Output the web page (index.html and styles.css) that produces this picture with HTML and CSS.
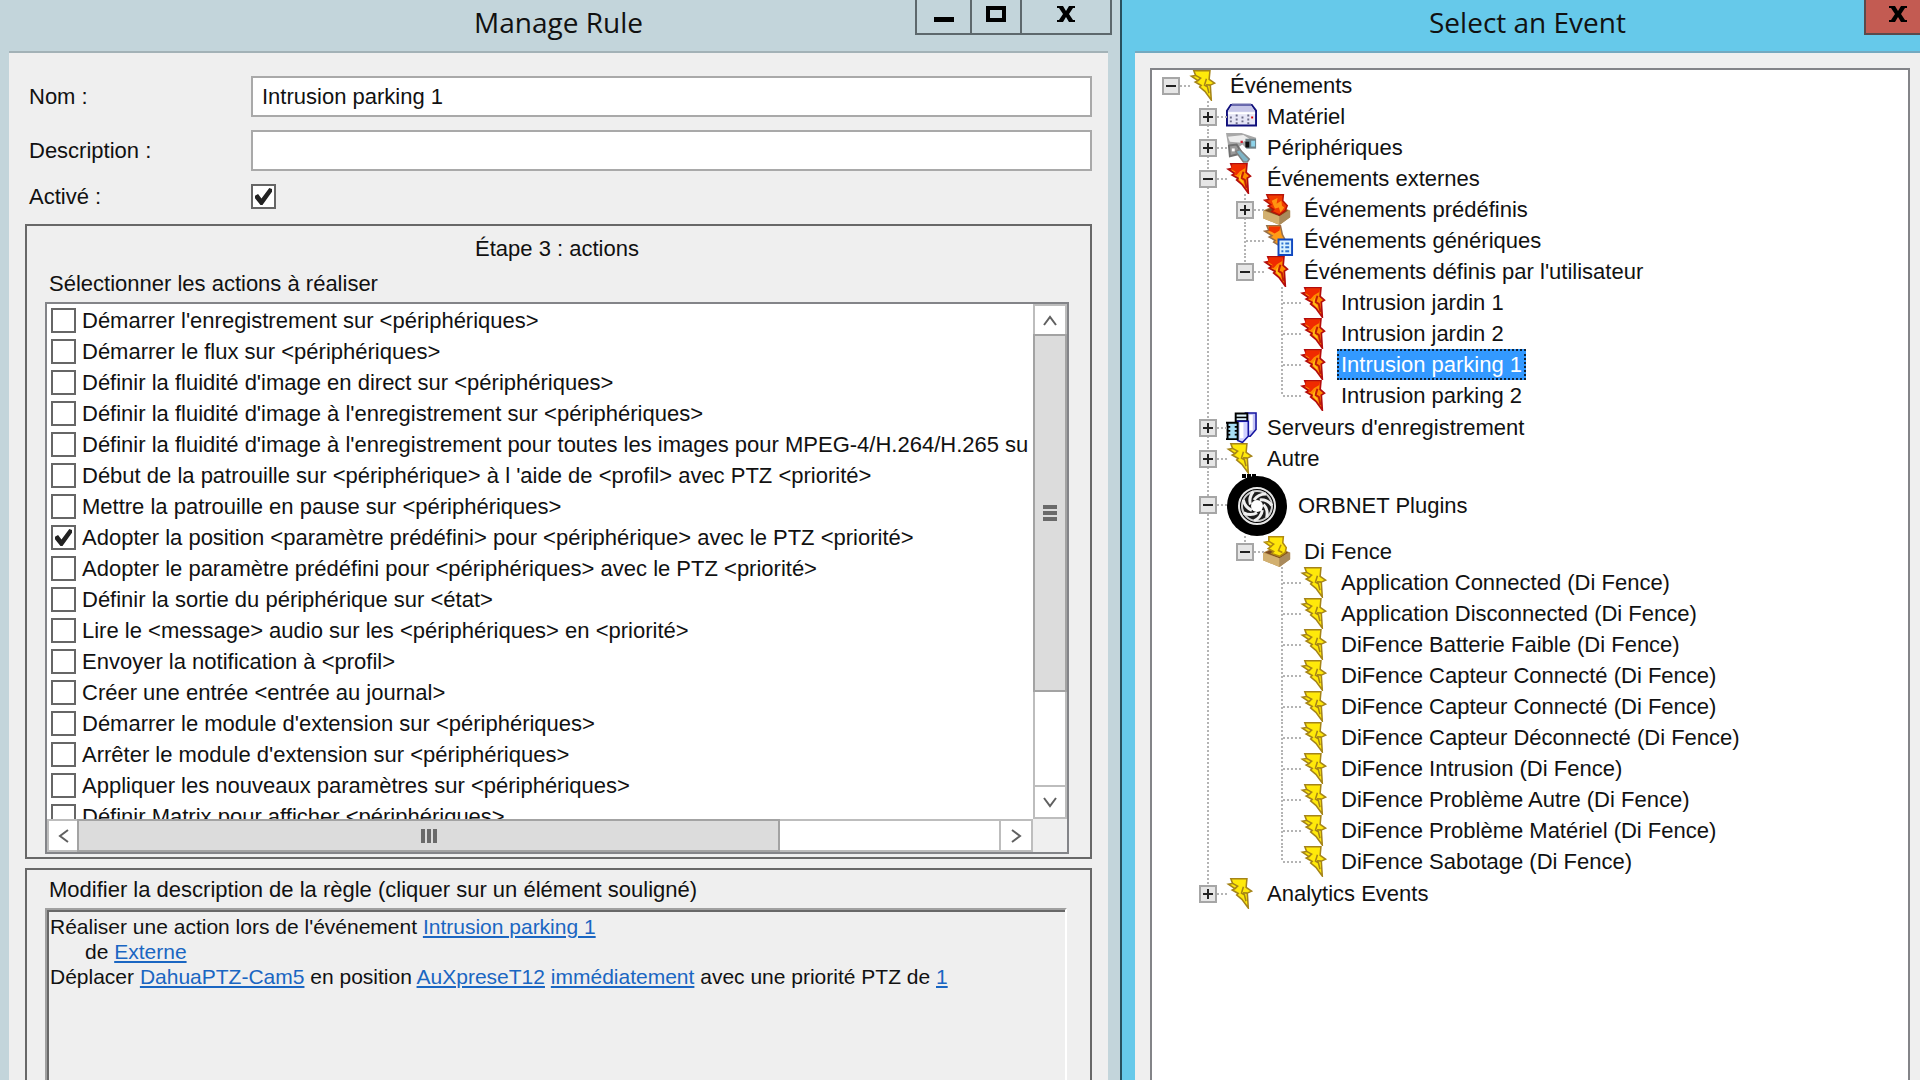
FILE: index.html
```html
<!DOCTYPE html>
<html lang="fr">
<head>
    <meta charset="UTF-8">
    <meta name="viewport" content="width=device-width, initial-scale=1.0">
    <title>Manage Rule</title>
    <link rel="stylesheet" href="styles.css">
</head>
<body>
    <!-- shared icons -->
    <svg class="sprite" aria-hidden="true">
        <symbol id="bolt" viewBox="0 0 16 16">
            <path d="M2.500.4H10.800L10.400 4.800 13.200 6.800 11 7.800 11.500 15.500 8.200 11 5.500 8.800 6.300 8 3.200 6.200 4.600 5.500 1.200 3.200 3.400 2.800z" fill="#ffe90a" stroke="#a58418" stroke-width=".8"/>
            <path d="M3.400 2.800l2.600 1.400-1.400 1.300M8.800 7.600l2.200.2M9 4.500l-1 3.300 1.500.9.800 3.300" fill="none" stroke="#a58418" stroke-width=".8"/>
        </symbol>
        <symbol id="bolt-red" viewBox="0 0 16 16">
            <path d="M2.500.4H10.800L10.400 4.800 12.600 6.800 11 7.800 11.500 15.500 8.200 11 5.500 8.800 6.300 8 3.200 6.200 4.600 5.500 1.200 3.200 3.400 2.800z" fill="#ff8c00" stroke="#b40c0c" stroke-width=".9"/>
            <path d="M3 .8h7.400l-.4 1.800-2.800 1.600-1.700 2-1.500-.4 1-1.200-2.400-1.600z" fill="#f02a00"/>
            <path d="M9 4.500l-1 3.300 1.700.9.900 4.300" fill="none" stroke="#c01c08" stroke-width="1"/>
            <path d="M6.800 7l1-1.500-.3 2.500 1.500 1.600v1.400l-2.400-2.700z" fill="#ffc21a"/>
        </symbol>
        <symbol id="hardware" viewBox="0 0 16 16">
            <path d="M2.500 2h10.800l2.200 3v7.600H.5V5z" fill="#e6e6f6" stroke="#10107c"/>
            <path d="M2.700 2.500h10.400l1.900 3H1z" fill="#c6c6e8"/>
            <path d="M3 1.800h10" stroke="#6c6cae"/>
            <path d="M1 6.300h14" stroke="#fff"/>
            <path d="M2.500 8v4M5.500 7v5M8.500 8v4M11.500 7v5" stroke="#6c6c88" stroke-dasharray="1 1"/>
            <path d="M13 8h1v1h-1z" fill="#d00"/>
        </symbol>
        <symbol id="camera" viewBox="0 0 16 16">
            <path d="M0 .5h8l7.500 2.500v5.500h-5l-2-2-3 2-4.500-2z" fill="#a8a8a8"/>
            <path d="M1 2.500l8-1 3 2-4 2-6-.5z" fill="#ededed"/>
            <path d="M10 3.500h5.500v5h-5z" fill="#6f8288"/>
            <path d="M13 4.500h2v3h-2z" fill="#8fd4ea"/>
            <path d="M10 5h2v3h-2z" fill="#111"/>
            <path d="M7.500 4.500h1.200v1.200h-1.200z" fill="#d02030"/>
            <path d="M1.500 7l4-.5 2 3-1.500 2-4 1z" fill="#999" stroke="#707070"/>
            <path d="M5 10l2-1 5 5-1 1.500h-2z" fill="#7fb4c6" stroke="#808080" stroke-width=".8"/>
            <path d="M3 8.500h1.500v1.500h-1.500z" fill="#fff"/>
        </symbol>
        <symbol id="tray" viewBox="0 0 16 16">
            <path d="M0 8.500l7-3 7 3v3.500l-5.500 4-8.500-3.500z" fill="#b48a48"/>
            <path d="M1 8.500l6-2.500 6 2.500-4.500 3z" fill="#7b4a22"/>
            <path d="M0 8.500l8.500 3v4.500l-8.500-3.500z" fill="#d2b070"/>
            <path d="M8.500 11.500l5.500-3v3.500l-5.500 4z" fill="#a98a5c"/>
        </symbol>
        <symbol id="predefined" viewBox="0 0 16 16">
            <use href="#tray"/>
            <path d="M2 .4H10.500L10.200 3.500 12.500 6 11.500 8.500 8.500 10.800 4.500 9 5.500 8 2.700 6.200 4 5.500.8 3.200 3 2.800z" fill="#f23c00" stroke="#b81408" stroke-width=".8"/>
            <path d="M4.500 3.500l3-1.500-.5 3 2.500-1.500.3 2.500 1.200 1-2 2.500-.8-2.500-2 .5-.7-1.500z" fill="#ff9410"/>
        </symbol>
        <symbol id="plugin" viewBox="0 0 16 16">
            <use href="#tray"/>
            <path d="M3 .4H10.500L10.200 3.500 12 6 11.500 8.500 8.500 10.500 4.500 9 5.500 8 2.700 6.500 4 5.500.8 3.200 3 2.800z" fill="#ffe60a" stroke="#b08a10" stroke-width=".8"/>
            <path d="M3 2.800l2.500 1.400-1.500 1.300M9.300 4.500l-1.300 3 2 1" fill="none" stroke="#b08a10" stroke-width=".8"/>
        </symbol>
        <symbol id="generic" viewBox="0 0 16 16">
            <path d="M2 .4H9L10 5 11.500 7.800v4l-3.300-1.300L5.500 8.800 6.300 8 3.200 6.200 4.600 5.500 1 3.200 3 2.800z" fill="#ff9c18" stroke="#9a7048" stroke-width=".8"/>
            <path d="M3 .8h6l-.5 2-2.500 1.600-3-1.600z" fill="#f03400"/>
            <path d="M8 7.500h7v8h-7z" fill="#d8f2ff" stroke="#1048c0"/>
            <path d="M9.500 9.500h1M9.500 11.500h1M9.500 13.500h1M11.500 9.500h2M11.500 11.500h2M11.500 13.500h2" stroke="#2f74d0"/>
        </symbol>
        <symbol id="servers" viewBox="0 0 16 16">
            <path d="M10 .5h5.500v8.500l-3 3.500h-2.500z" fill="#c4c4f6" stroke="#1414a0" stroke-width=".8"/>
            <path d="M12 1.500h1.800v8h-1.800z" fill="#fff"/>
            <path d="M5 .8h6v4h-6z" fill="#dff2fc" stroke="#000"/>
            <path d="M5 2.800h6" stroke="#000" stroke-width=".8"/>
            <path d="M6 4.800h5.500v7.700l-3 3.200-2.500-1z" fill="#d0d0ff" stroke="#1414a0" stroke-width=".8"/>
            <path d="M7.200 5.500h1.800v8h-1.800z" fill="#fff"/>
            <path d="M.5 5.500h6v9h-6z" fill="#a8dcf4"/>
            <path d="M.8 5v9.500M6 5v9.500M0 5.500h6.500M0 14h6.500" stroke="#000"/>
            <path d="M1 7.700h1.200M1 9.700h1.200M1 11.700h1.200M4.500 7.700h1.200M4.500 9.700h1.200M4.500 11.700h1.200" stroke="#000" stroke-width=".9"/>
        </symbol>
        <symbol id="wheel" viewBox="0 0 62 62">
            <path d="M16 0h4v4h-4zM21 0h4v4h-4zM26 0h4v4h-4z"/>
            <circle cx="31" cy="32" r="30"/>
            <circle cx="31" cy="32" r="18" fill="none" stroke="#e6e6e6" stroke-width="2"/>
            <circle cx="31" cy="32" r="15" fill="#1c1c1c" stroke="#cfcfcf" stroke-width="2"/>
            <g fill="none" stroke="#f0f0f0" stroke-width="3">
                <path id="blade" d="M28 26q4-6 12-6"/>
                <use href="#blade" transform="rotate(51 31 32)"/>
                <use href="#blade" transform="rotate(103 31 32)"/>
                <use href="#blade" transform="rotate(154 31 32)"/>
                <use href="#blade" transform="rotate(206 31 32)"/>
                <use href="#blade" transform="rotate(257 31 32)"/>
                <use href="#blade" transform="rotate(309 31 32)"/>
            </g>
            <circle cx="31" cy="32" r="6" fill="#fff"/>
        </symbol>
    </svg>

    <main class="desktop">
        <section class="window rule">
            <header class="titlebar">
                <h1>Manage Rule</h1>
                <div class="window-buttons">
                    <button class="min" aria-label="Minimize"><svg viewBox="0 0 20 16"><path d="M0 11h20v5h-20z"/></svg></button>
                    <button class="max" aria-label="Maximize"><svg viewBox="0 0 20 16"><path fill-rule="evenodd" d="M0 0h20v16h-20zM4 4v8h12v-8z"/></svg></button>
                    <button class="close" aria-label="Close"><svg viewBox="0 0 20 16"><path d="M1 0h6l3 5 3-5h6v2h-2l-4 6 4 6h2v2h-6l-3-5-3 5h-6v-2h2l4-6-4-6h-2z"/></svg></button>
                </div>
            </header>
            <div class="content">
                <form class="fields">
                    <label for="name">Nom :</label>
                    <input type="text" id="name" value="Intrusion parking 1">
                    <label for="description">Description :</label>
                    <input type="text" id="description">
                    <label for="active">Activé :</label>
                    <input type="checkbox" id="active" checked>
                </form>

                <section class="group step">
                    <h2>Étape 3 : actions</h2>
                    <p class="caption">Sélectionner les actions à réaliser</p>
                    <div class="listbox">
                        <div class="options">
                            <label><input type="checkbox">Démarrer l'enregistrement sur &lt;périphériques&gt;</label>
                            <label><input type="checkbox">Démarrer le flux sur &lt;périphériques&gt;</label>
                            <label><input type="checkbox">Définir la fluidité d'image en direct sur &lt;périphériques&gt;</label>
                            <label><input type="checkbox">Définir la fluidité d'image à l'enregistrement sur &lt;périphériques&gt;</label>
                            <label><input type="checkbox">Définir la fluidité d'image à l'enregistrement pour toutes les images pour MPEG-4/H.264/H.265 su</label>
                            <label><input type="checkbox">Début de la patrouille sur &lt;périphérique&gt; à l 'aide de &lt;profil&gt; avec PTZ &lt;priorité&gt;</label>
                            <label><input type="checkbox">Mettre la patrouille en pause sur &lt;périphériques&gt;</label>
                            <label><input type="checkbox" checked>Adopter la position &lt;paramètre prédéfini&gt; pour &lt;périphérique&gt; avec le PTZ &lt;priorité&gt;</label>
                            <label><input type="checkbox">Adopter le paramètre prédéfini pour &lt;périphériques&gt; avec le PTZ &lt;priorité&gt;</label>
                            <label><input type="checkbox">Définir la sortie du périphérique sur &lt;état&gt;</label>
                            <label><input type="checkbox">Lire le &lt;message&gt; audio sur les &lt;périphériques&gt; en &lt;priorité&gt;</label>
                            <label><input type="checkbox">Envoyer la notification à &lt;profil&gt;</label>
                            <label><input type="checkbox">Créer une entrée &lt;entrée au journal&gt;</label>
                            <label><input type="checkbox">Démarrer le module d'extension sur &lt;périphériques&gt;</label>
                            <label><input type="checkbox">Arrêter le module d'extension sur &lt;périphériques&gt;</label>
                            <label><input type="checkbox">Appliquer les nouveaux paramètres sur &lt;périphériques&gt;</label>
                            <label><input type="checkbox">Définir Matrix pour afficher &lt;périphériques&gt;</label>
                        </div>
                        <div class="scrollbar vertical">
                            <button aria-label="Up"><svg viewBox="0 0 14 14"><path d="M1 11l6-8 6 8"/></svg></button>
                            <div class="thumb"><span class="grip"></span></div>
                            <div class="track"></div>
                            <button aria-label="Down"><svg viewBox="0 0 14 14"><path d="M1 3l6 8 6-8"/></svg></button>
                        </div>
                        <div class="scrollbar horizontal">
                            <button aria-label="Left"><svg viewBox="0 0 14 14"><path d="M11 1l-8 6 8 6"/></svg></button>
                            <div class="thumb"><span class="grip"></span></div>
                            <div class="track"></div>
                            <button aria-label="Right"><svg viewBox="0 0 14 14"><path d="M3 1l8 6-8 6"/></svg></button>
                        </div>
                    </div>
                </section>

                <section class="group summary">
                    <p class="caption">Modifier la description de la règle (cliquer sur un élément souligné)</p>
                    <div class="rule-text">
                        <p>Réaliser une action lors de l'événement <a href="#">Intrusion parking 1</a></p>
                        <p class="indent">de <a href="#">Externe</a></p>
                        <p>Déplacer <a href="#">DahuaPTZ-Cam5</a> en position <a href="#">AuXpreseT12</a> <a href="#">immédiatement</a> avec une priorité PTZ de <a href="#">1</a></p>
                    </div>
                </section>
            </div>
        </section>

        <section class="window event">
            <header class="titlebar">
                <h1>Select an Event</h1>
                <div class="window-buttons">
                    <button class="close" aria-label="Close"><svg viewBox="0 0 20 16"><path d="M1 0h6l3 5 3-5h6v2h-2l-4 6 4 6h2v2h-6l-3-5-3 5h-6v-2h2l4-6-4-6h-2z"/></svg></button>
                </div>
            </header>
            <div class="content">
                <ul class="tree">
                    <li>
                        <div class="node"><button class="toggle open" aria-label="Collapse"></button><svg class="icon"><use href="#bolt"/></svg><span>Événements</span></div>
                        <ul>
                            <li><div class="node"><button class="toggle" aria-label="Expand"></button><svg class="icon"><use href="#hardware"/></svg><span>Matériel</span></div></li>
                            <li><div class="node"><button class="toggle" aria-label="Expand"></button><svg class="icon"><use href="#camera"/></svg><span>Périphériques</span></div></li>
                            <li>
                                <div class="node"><button class="toggle open" aria-label="Collapse"></button><svg class="icon"><use href="#bolt-red"/></svg><span>Événements externes</span></div>
                                <ul>
                                    <li><div class="node"><button class="toggle" aria-label="Expand"></button><svg class="icon"><use href="#predefined"/></svg><span>Événements prédéfinis</span></div></li>
                                    <li><div class="node leaf"><svg class="icon"><use href="#generic"/></svg><span>Événements génériques</span></div></li>
                                    <li>
                                        <div class="node"><button class="toggle open" aria-label="Collapse"></button><svg class="icon"><use href="#bolt-red"/></svg><span>Événements définis par l'utilisateur</span></div>
                                        <ul>
                                            <li><div class="node leaf"><svg class="icon"><use href="#bolt-red"/></svg><span>Intrusion jardin 1</span></div></li>
                                            <li><div class="node leaf"><svg class="icon"><use href="#bolt-red"/></svg><span>Intrusion jardin 2</span></div></li>
                                            <li><div class="node leaf"><svg class="icon"><use href="#bolt-red"/></svg><span class="selected">Intrusion parking 1</span></div></li>
                                            <li><div class="node leaf"><svg class="icon"><use href="#bolt-red"/></svg><span>Intrusion parking 2</span></div></li>
                                        </ul>
                                    </li>
                                </ul>
                            </li>
                            <li><div class="node"><button class="toggle" aria-label="Expand"></button><svg class="icon"><use href="#servers"/></svg><span>Serveurs d'enregistrement</span></div></li>
                            <li><div class="node"><button class="toggle" aria-label="Expand"></button><svg class="icon"><use href="#bolt"/></svg><span>Autre</span></div></li>
                            <li>
                                <div class="node large"><button class="toggle open" aria-label="Collapse"></button><svg class="icon"><use href="#wheel"/></svg><span>ORBNET Plugins</span></div>
                                <ul>
                                    <li>
                                        <div class="node"><button class="toggle open" aria-label="Collapse"></button><svg class="icon"><use href="#plugin"/></svg><span>Di Fence</span></div>
                                        <ul>
                                            <li><div class="node leaf"><svg class="icon"><use href="#bolt"/></svg><span>Application Connected (Di Fence)</span></div></li>
                                            <li><div class="node leaf"><svg class="icon"><use href="#bolt"/></svg><span>Application Disconnected (Di Fence)</span></div></li>
                                            <li><div class="node leaf"><svg class="icon"><use href="#bolt"/></svg><span>DiFence Batterie Faible (Di Fence)</span></div></li>
                                            <li><div class="node leaf"><svg class="icon"><use href="#bolt"/></svg><span>DiFence Capteur Connecté (Di Fence)</span></div></li>
                                            <li><div class="node leaf"><svg class="icon"><use href="#bolt"/></svg><span>DiFence Capteur Connecté (Di Fence)</span></div></li>
                                            <li><div class="node leaf"><svg class="icon"><use href="#bolt"/></svg><span>DiFence Capteur Déconnecté (Di Fence)</span></div></li>
                                            <li><div class="node leaf"><svg class="icon"><use href="#bolt"/></svg><span>DiFence Intrusion (Di Fence)</span></div></li>
                                            <li><div class="node leaf"><svg class="icon"><use href="#bolt"/></svg><span>DiFence Problème Autre (Di Fence)</span></div></li>
                                            <li><div class="node leaf"><svg class="icon"><use href="#bolt"/></svg><span>DiFence Problème Matériel (Di Fence)</span></div></li>
                                            <li><div class="node leaf"><svg class="icon"><use href="#bolt"/></svg><span>DiFence Sabotage (Di Fence)</span></div></li>
                                        </ul>
                                    </li>
                                </ul>
                            </li>
                            <li><div class="node"><button class="toggle" aria-label="Expand"></button><svg class="icon"><use href="#bolt"/></svg><span>Analytics Events</span></div></li>
                        </ul>
                    </li>
                </ul>
            </div>
        </section>
    </main>
</body>
</html>
```
FILE: styles.css
```css
* {
    box-sizing: border-box;
    margin: 0;
    padding: 0;
}
body {
    font-family: "Liberation Sans", Arial, sans-serif;
    font-size: 22px;
    line-height: 31px;
    color: #111;
    overflow: hidden;
}
button, input {
    font: inherit;
    color: inherit;
}
.sprite {
    position: absolute;
    width: 0;
    height: 0;
}
.desktop {
    display: grid;
    grid-template-columns: 7fr 5fr;
    height: 100vh;
}

/* windows */
.window {
    display: flex;
    flex-direction: column;
    min-width: 0;
    min-height: 0;
}
.rule {
    background-color: #c3d5db;
    padding: 0 12px 0 9px;
}
.event {
    background-color: #66c9ea;
    border-left: 2px solid #27505f;
    padding-left: 13px;
}
.titlebar {
    position: relative;
    height: 53px;
    flex: none;
    border-bottom: 2px solid #a3b2b7;
}
.event .titlebar {
    border-bottom-color: #74a9c0;
}
.titlebar h1 {
    font-family: "Open Sans", "Noto Sans", sans-serif;
    font-size: 28px;
    font-weight: 400;
    line-height: 44px;
    text-align: center;
}
.window-buttons {
    position: absolute;
    top: 0;
    right: -4px;
    display: flex;
    height: 35px;
    border: 2px solid #5d686c;
    border-top: 0;
}
.event .window-buttons {
    right: 0;
    border-color: #5a4a4c;
    border-right: 0;
}
.window-buttons button {
    width: 50px;
    border: 0;
    border-left: 2px solid #5d686c;
    background: none;
}
.window-buttons button:first-child {
    border-left: 0;
}
.window-buttons .min {
    width: 53px;
}
.window-buttons .close {
    width: 90px;
}
.event .window-buttons .close {
    width: 54px;
    padding-left: 10px;
    background-color: #c35b52;
}
.window-buttons svg {
    display: block;
    width: 20px;
    height: 16px;
    margin: 0 auto 6px;
}
.content {
    flex: 1;
    min-height: 0;
    display: flex;
    flex-direction: column;
    background-color: #efefef;
}
.rule .content {
    padding: 23px 16px 0;
}
.event .content {
    padding: 15px 10px 0 15px;
}

/* form */
.fields {
    display: grid;
    grid-template-columns: 222px 1fr;
    align-items: center;
    row-gap: 13px;
    padding-left: 4px;
    line-height: 25px;
}
.fields input[type="text"] {
    width: 100%;
    height: 41px;
    border: 2px solid #a9a9a9;
    background-color: #fff;
    padding: 0 9px;
}
input[type="checkbox"] {
    appearance: none;
    flex: none;
    width: 25px;
    height: 25px;
    border: 2px solid #666;
    background-color: #fff;
}
input[type="checkbox"]:checked::after {
    content: "";
    display: block;
    width: 17px;
    height: 17px;
    margin: 2px;
    background-color: #222;
    clip-path: polygon(0 45%, 18% 35%, 38% 62%, 84% 0, 100% 6%, 100% 22%, 44% 100%, 32% 100%, 0 60%);
}

/* group boxes */
.group {
    border: 2px solid #686868;
    padding: 0 21px 0 18px;
}
.step {
    flex: none;
    margin-top: 15px;
    padding-bottom: 3px;
}
.step h2 {
    padding-top: 4px;
    font-size: 22px;
    font-weight: 400;
    line-height: 38px;
    text-align: center;
}
.caption {
    margin-bottom: 3px;
    padding-left: 4px;
}
.listbox {
    display: grid;
    grid-template-columns: 1fr 34px;
    grid-template-rows: 1fr 33px;
    height: 552px;
    border: 2px solid #838488;
    background-color: #efefef;
}
.options {
    overflow: hidden;
    background-color: #fff;
    padding: 1px 0 0 4px;
}
.options label {
    display: flex;
    align-items: center;
    gap: 6px;
    height: 31px;
    white-space: nowrap;
}
.scrollbar {
    display: flex;
    border: 2px solid #bdbdbd;
    background-color: #fff;
}
.vertical {
    flex-direction: column;
}
.scrollbar button {
    flex: none;
    width: 30px;
    height: 30px;
    border: 0;
    background-color: #fff;
}
.horizontal button {
    height: 29px;
}
.scrollbar svg {
    display: block;
    width: 14px;
    height: 14px;
    margin: auto;
    fill: none;
    stroke: #606060;
    stroke-width: 2;
}
.thumb {
    display: flex;
    align-items: center;
    justify-content: center;
    background-color: #dcdcdc;
    outline: 2px solid #a3a3a3;
}
.vertical .thumb {
    flex: 78;
}
.vertical .track {
    flex: 21;
    border-bottom: 2px solid #bdbdbd;
}
.horizontal .thumb {
    flex: 76;
}
.horizontal .track {
    flex: 24;
    border-right: 2px solid #bdbdbd;
}
.grip {
    width: 14px;
    height: 16px;
    background: repeating-linear-gradient(#6a6a6a 0 4px, transparent 4px 6px);
}
.horizontal .grip {
    width: 16px;
    height: 14px;
    background: repeating-linear-gradient(90deg, #6a6a6a 0 4px, transparent 4px 6px);
}

/* rule description */
.summary {
    flex: 1;
    display: flex;
    flex-direction: column;
    margin-top: 9px;
    border-bottom: 0;
    padding-top: 4px;
}
.rule-text {
    flex: 1;
    margin-right: 2px;
    border-top: 2px solid #a0a0a0;
    border-left: 2px solid #a0a0a0;
    border-right: 2px solid #fff;
    box-shadow: inset 2px 2px #686868;
    padding: 4px 0 0 3px;
    font-size: 21px;
    line-height: 25px;
}
.indent {
    padding-left: 35px;
}
a {
    color: #1a66c2;
}

/* event tree */
.tree {
    flex: 1;
    border: 2px solid #838488;
    border-bottom: 0;
    background-color: #fff;
    padding-left: 10px;
}
.tree ul {
    padding-left: 37px;
    margin-bottom: 1px;
}
li {
    position: relative;
    list-style: none;
}
.tree ul > li::before {
    content: "";
    position: absolute;
    top: 0;
    bottom: 0;
    left: 8px;
    width: 2px;
    background: repeating-linear-gradient(#b4b4b4 0 2px, transparent 2px 4px);
}
.tree ul > li:last-child::before {
    bottom: auto;
    height: 16px;
}
.node {
    position: relative;
    display: flex;
    align-items: center;
    height: 31px;
}
.node::before {
    content: "";
    position: absolute;
    left: 18px;
    width: 10px;
    height: 2px;
    background: repeating-linear-gradient(90deg, #b4b4b4 0 2px, transparent 2px 4px);
}
.leaf {
    padding-left: 28px;
}
.leaf::before {
    left: 10px;
    width: 18px;
}
.large {
    height: 62px;
}
.toggle {
    width: 18px;
    height: 18px;
    margin-right: 9px;
    border: 2px solid #a6a6a6;
    background:
        linear-gradient(#222, #222) center / 10px 2px no-repeat,
        linear-gradient(#222, #222) center / 2px 10px no-repeat,
        #e6e6e6;
}
.leaf .icon {
    margin-left: -1px;
}
.toggle.open {
    background:
        linear-gradient(#222, #222) center / 10px 2px no-repeat,
        #e6e6e6;
}
.icon {
    width: 31px;
    height: 31px;
    margin-right: 6px;
}
.large .icon {
    width: 62px;
    height: 62px;
}
.node span {
    padding: 0 4px;
    white-space: nowrap;
}
.node .selected {
    background-color: #3399ff;
    color: #fff;
    outline: 2px dotted #123;
    outline-offset: -2px;
}
```
